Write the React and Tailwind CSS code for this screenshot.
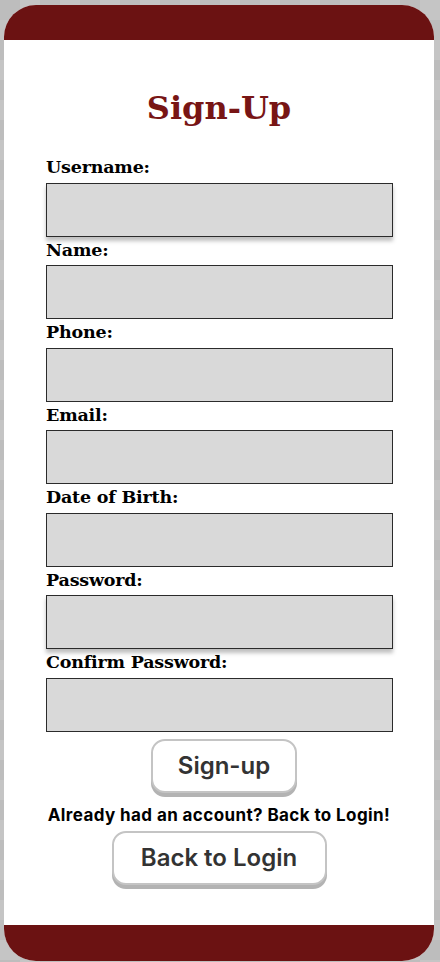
import React from "react";

const fields = [
  { label: "Username:", shadow: true },
  { label: "Name:" },
  { label: "Phone:" },
  { label: "Email:" },
  { label: "Date of Birth:" },
  { label: "Password:", shadow: true },
  { label: "Confirm Password:" },
];

export default function App() {
  return (
    <div className="w-[440px] h-[962px] pt-[5px] pl-[4px] pr-[6px] pb-[1px] bg-[repeating-conic-gradient(#c5c5c5_0_25%,#bdbdbd_0_50%)] bg-[length:40px_40px]">
      <div className="h-full flex flex-col bg-white rounded-[32px] overflow-hidden">
        <div className="h-[35px] bg-[#6b1212] shrink-0" />
        <div className="flex-1 flex flex-col items-center">
          <h1 className="mt-[48px] leading-[40px] text-[32px] font-bold text-[#781515] font-['DejaVu_Serif',serif]">
            Sign-Up
          </h1>
          <div className="mt-[26px] w-full pl-[42px] pr-[41px] flex flex-col">
            {fields.map((f) => (
              <div key={f.label} className="flex flex-col">
                <div className="h-[28.5px] leading-[26px] text-[17.5px] font-bold text-black font-['DejaVu_Serif',serif] tracking-[-0.2px]">
                  {f.label}
                </div>
                <div
                  className={
                    f.shadow
                      ? "h-[54px] w-full bg-[#d9d9d9] border border-[#2b2b2b] shadow-[0_4px_4px_rgba(0,0,0,0.25)]"
                      : "h-[54px] w-full bg-[#d9d9d9] border border-[#2b2b2b]"
                  }
                />
              </div>
            ))}
          </div>
          <button className="mt-[7px] ml-[10px] w-[146px] h-[54px] rounded-[14px] border-2 border-[#c4c4c4] bg-white shadow-[0_4px_0_#b3b3b3] text-[24px] font-semibold text-[#333333] font-['Inter',sans-serif]">
            Sign-up
          </button>
          <p className="mt-[12px] leading-[20px] text-[17px] tracking-[0.4px] font-bold text-black font-['Inter',sans-serif]">
            Already had an account? Back to Login!
          </p>
          <button className="mt-[6px] w-[215px] h-[54px] rounded-[14px] border-2 border-[#c4c4c4] bg-white shadow-[0_4px_0_#b3b3b3] text-[24px] font-semibold text-[#333333] font-['Inter',sans-serif]">
            Back to Login
          </button>
        </div>
        <div className="h-[36px] bg-[#6b1212] shrink-0" />
      </div>
    </div>
  );
}
